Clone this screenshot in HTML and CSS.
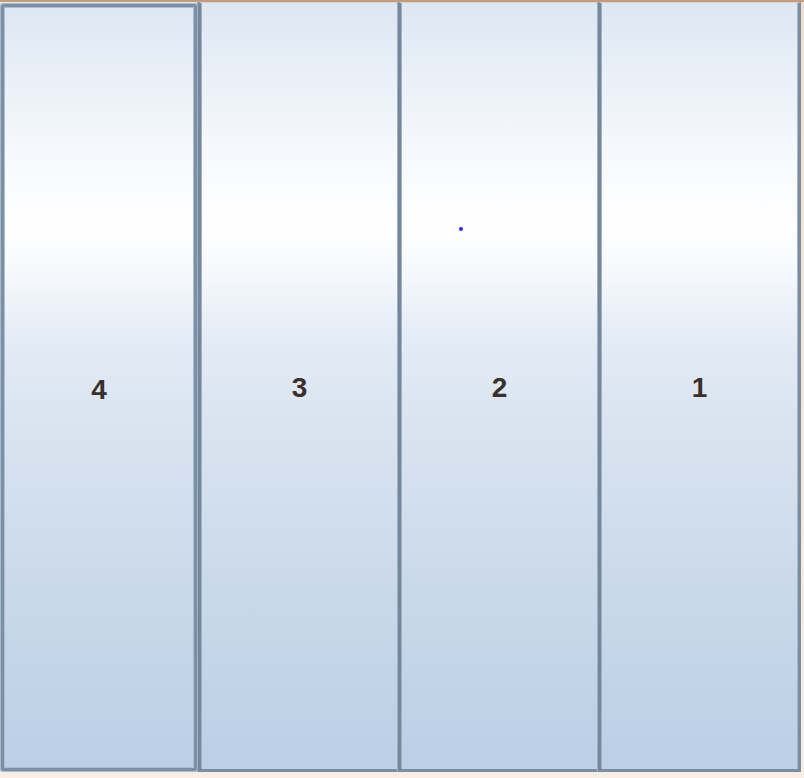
FILE: index.html
```html
<!DOCTYPE html>
<html>
<head>
<meta charset="utf-8">
<link rel="stylesheet" href="styles.css">
</head>
<body>
<div class="frame">
  <div class="row">
    <div class="slot">
      <div class="panel panel-selected"><span class="label">4</span></div>
    </div>
    <div class="panel panel-tab"><span class="label">3</span></div>
    <div class="panel panel-tab"><span class="label">2</span><span class="dot"></span></div>
    <div class="panel panel-tab panel-last"><span class="label">1</span></div>
  </div>
</div>
</body>
</html>
```
FILE: styles.css
```css
html, body {
  margin: 0;
  padding: 0;
  width: 804px;
  height: 778px;
  overflow: hidden;
  background: #f6ebe1;
}

.frame {
  width: 804px;
  height: 778px;
  border-top: 2px solid #c99a74;
  box-sizing: border-box;
  background: linear-gradient(to bottom, #efdfd0 0%, #f8eee6 100%);
}

.row {
  display: flex;
  height: 770px;
  width: 801px;
}

.slot {
  width: 198px;
  flex: none;
  padding: 2px 1px 1px 1px;
  box-sizing: border-box;
  display: flex;
  background: #dfe8f3;
}

.panel {
  position: relative;
  display: flex;
  align-items: center;
  justify-content: center;
  box-sizing: border-box;
  background: linear-gradient(to bottom,
    #dde7f2 0%,
    #eef3f9 13%,
    #fbfcfe 24%,
    #ffffff 29%,
    #f4f7fb 36%,
    #e3ebf5 44%,
    #d9e4f0 55%,
    #cddbeb 72%,
    #c2d4e8 88%,
    #bbcfe5 100%);
}

.panel-selected {
  flex: 1;
  border: 3px solid #7d90a3;
  box-shadow: inset 0 0 0 1px #a9bfd5, 0 0 0 1px #a8bccf;
  border-radius: 2px;
}

.panel-tab {
  width: 200px;
  flex: none;
  border-left: 3px solid #75879a;
  border-bottom: 3px solid #7b8da0;
  border-top: 1px solid #c9d6e3;
  box-shadow: inset 1px 0 0 #9fb1c3, -1px 0 0 #9fb2c5;
}

.panel-last {
  width: 203px;
  border-right: 3px solid #7b8da0;
  box-shadow: inset 1px 0 0 #9fb1c3, -1px 0 0 #9fb2c5, inset -1px 0 0 #a6b8ca;
}

.label {
  font-family: "Liberation Sans", Arial, sans-serif;
  font-weight: bold;
  font-size: 28px;
  color: #3a302b;
  margin-top: 4px;
  margin-left: 0;
}

.dot {
  position: absolute;
  left: 58px;
  top: 224px;
  width: 4px;
  height: 4px;
  border-radius: 50%;
  background: #2a2af0;
}
```
